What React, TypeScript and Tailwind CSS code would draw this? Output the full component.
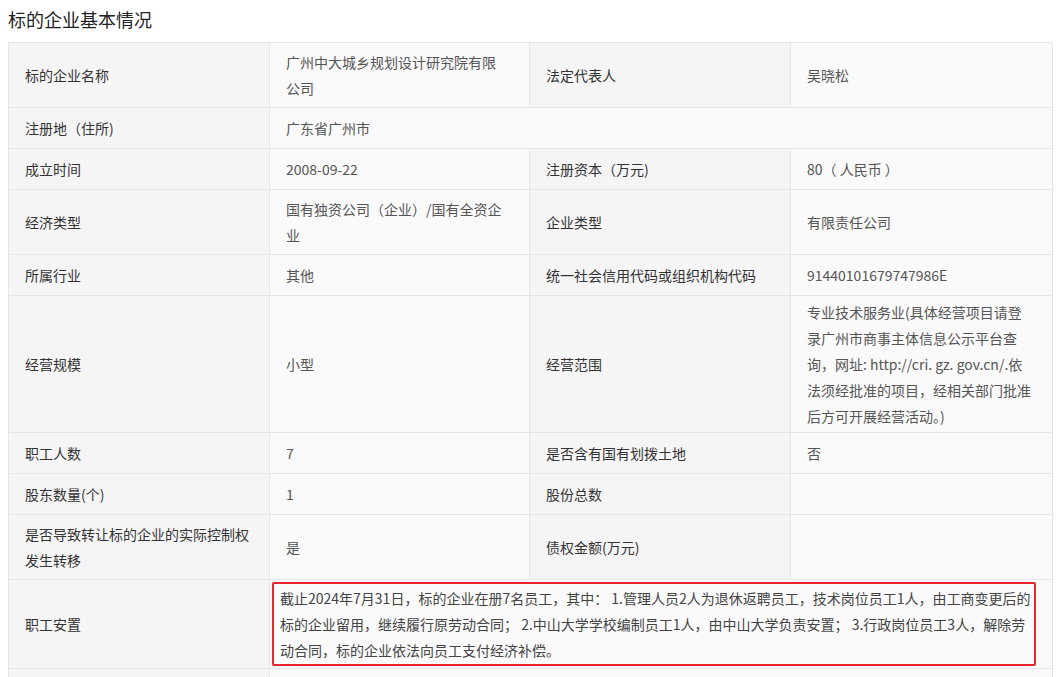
import React from "react";

const F = { fontFamily: '"Noto Sans CJK SC","Microsoft YaHei",sans-serif' };
const L = "border border-[#e6e6e6] bg-[#f5f5f5] pl-4 pr-3 text-[#333] align-middle";
const V = "border border-[#e6e6e6] bg-[#fafafa] pl-4 pr-5 text-[#555] align-middle";

type R = { h: number; a: React.ReactNode; b: React.ReactNode; c?: React.ReactNode; d?: React.ReactNode; span?: boolean };
const rows: R[] = [
  { h: 65, a: "标的企业名称", b: "广州中大城乡规划设计研究院有限公司", c: "法定代表人", d: "吴晓松" },
  { h: 41, a: "注册地（住所)", b: "广东省广州市", span: true },
  { h: 41, a: "成立时间", b: "2008-09-22", c: "注册资本（万元)", d: "80（ 人民币 ）" },
  { h: 65, a: "经济类型", b: "国有独资公司（企业）/国有全资企业", c: "企业类型", d: "有限责任公司" },
  { h: 41, a: "所属行业", b: "其他", c: "统一社会信用代码或组织机构代码", d: "91440101679747986E" },
  { h: 137, a: "经营规模", b: "小型", c: "经营范围", d: "专业技术服务业(具体经营项目请登录广州市商事主体信息公示平台查询，网址: http://cri. gz. gov.cn/.依法须经批准的项目，经相关部门批准后方可开展经营活动。)" },
  { h: 41, a: "职工人数", b: "7", c: "是否含有国有划拨土地", d: "否" },
  { h: 41, a: "股东数量(个)", b: "1", c: "股份总数", d: "" },
  { h: 65, a: "是否导致转让标的企业的实际控制权发生转移", b: "是", c: "债权金额(万元)", d: "" },
];

export default function App() {
  return (
    <div className="w-[1062px] h-[677px] overflow-hidden bg-white" style={F}>
      <div className="h-[42px] pl-2 pt-[6px] text-[18px] font-normal text-[#222] leading-[26px]">标的企业基本情况</div>
      <table className="ml-2 w-[1044px] table-fixed border-collapse text-[14px] leading-[26px]">
        <colgroup>
          <col className="w-[261px]" />
          <col className="w-[260px]" />
          <col className="w-[261px]" />
          <col className="w-[262px]" />
        </colgroup>
        <tbody>
          {rows.map((r, i) => (
            <tr key={i} style={{ height: r.h }}>
              <td className={L}>{r.a}</td>
              {r.span ? (
                <td className={V} colSpan={3}>{r.b}</td>
              ) : (
                <>
                  <td className={V}>{r.b}</td>
                  <td className={L}>{r.c}</td>
                  <td className={V}>{r.d}</td>
                </>
              )}
            </tr>
          ))}
          <tr style={{ height: 89 }}>
            <td className={L}>职工安置</td>
            <td className="border border-[#e6e6e6] bg-[#fafafa] pl-[2px] pr-4 align-middle text-[#444]" colSpan={3}>
              <div className="border-[2px] border-[#e8262b] rounded-[2px] pl-[6px] pr-[2px] py-[1px] leading-[26px]">
                截止2024年7月31日，标的企业在册7名员工，其中： 1.管理人员2人为退休返聘员工，技术岗位员工1人，由工商变更后的标的企业留用，继续履行原劳动合同； 2.中山大学学校编制员工1人，由中山大学负责安置； 3.行政岗位员工3人，解除劳动合同，标的企业依法向员工支付经济补偿。
              </div>
            </td>
          </tr>
          <tr style={{ height: 41 }}>
            <td className={L}></td>
            <td className={V} colSpan={3}></td>
          </tr>
        </tbody>
      </table>
    </div>
  );
}
